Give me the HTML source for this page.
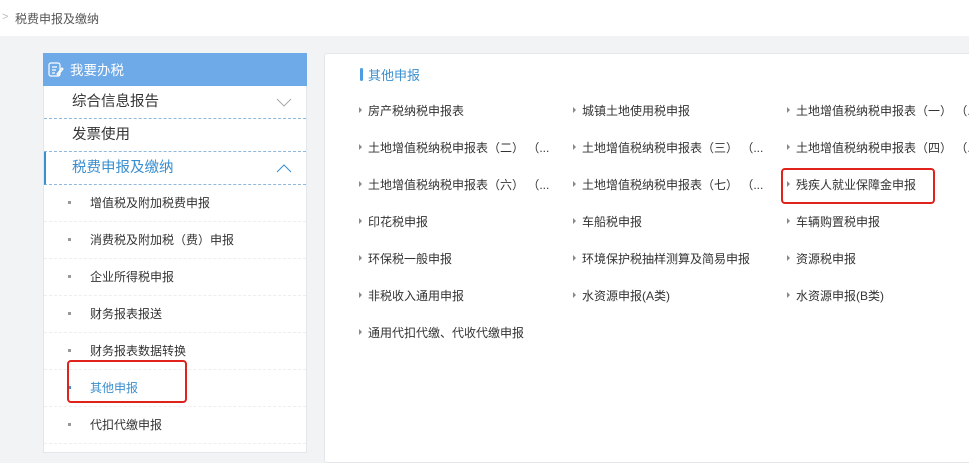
<!DOCTYPE html><html><head><meta charset="utf-8"><style>
*{margin:0;padding:0;box-sizing:border-box}
body{width:969px;height:449px;overflow:hidden;background:#f2f3f5;font-family:"Liberation Sans","Noto Sans CJK SC",sans-serif;font-size:12.5px;color:#333;position:relative}
.a{position:absolute;white-space:nowrap}
#top{position:absolute;left:0;top:0;width:969px;height:36px;background:#fff}
#left{position:absolute;left:43px;top:53px;width:264px;height:400px;background:#fff;border:1px solid #e3e6ea}
#lh{position:absolute;left:43px;top:53px;width:264px;height:33px;background:#6ea9e8;color:#fff;font-size:13.5px}
.row{position:absolute;left:44px;width:262px;height:33px;border-bottom:1px dashed #8fb8dd;font-size:14.5px;line-height:33px;padding-left:28px}
.sub{position:absolute;left:44px;width:262px;border-bottom:1px dashed #eee;height:37px}
.sub span{position:absolute;left:46px;top:9px;font-size:12px}
.sub i{position:absolute;left:24px;top:16px;width:3px;height:3px;background:#999}
#right{position:absolute;left:324px;top:53px;width:660px;height:410px;background:#fff;border:1px solid #e3e6ea;border-radius:3px}
.it{position:absolute;white-space:nowrap;font-size:12px}
.it:before{content:"";position:absolute;left:-9px;top:5px;border-left:3px solid #888;border-top:3px solid transparent;border-bottom:3px solid transparent}
.red{position:absolute;border:2.5px solid #e0221c;border-radius:4px}
</style></head><body>
<div id="top"></div>
<div class="a" style="left:2px;top:11px;color:#bbb;font-size:11px">&gt;</div>
<div class="a" style="left:15px;top:10px;color:#555;font-size:12px">税费申报及缴纳</div>
<div id="left"></div>
<div id="lh"><svg class="a" style="left:5px;top:8px" width="16" height="17" viewBox="0 0 16 17" fill="none" stroke="#fff" stroke-width="1.2"><rect x="1" y="2" width="11" height="13" rx="2"/><path d="M4 6h5M4 9h4M4 12h3M9 13l5-6 1 1-5 6z"/></svg><span class="a" style="left:27px;top:6px">我要办税</span></div>
<div class="row" style="top:86px">综合信息报告<svg class="a" style="left:232px;top:12px" width="16" height="9"><path d="M1 1l7 7 7-7" fill="none" stroke="#aaa"/></svg></div>
<div class="row" style="top:119px">发票使用</div>
<div class="row" style="top:152px;color:#3a8fd0;border-left:2px solid #3a8fd0;padding-left:26px">税费申报及缴纳<svg class="a" style="left:230px;top:12px" width="16" height="9"><path d="M1 8l7-7 7 7" fill="none" stroke="#3a8fd0"/></svg></div>
<div class="sub" style="top:185px"><i></i><span>增值税及附加税费申报</span></div>
<div class="sub" style="top:222px"><i></i><span>消费税及附加税（费）申报</span></div>
<div class="sub" style="top:259px"><i></i><span>企业所得税申报</span></div>
<div class="sub" style="top:296px"><i></i><span>财务报表报送</span></div>
<div class="sub" style="top:333px"><i></i><span>财务报表数据转换</span></div>
<div class="sub" style="top:370px"><i style="background:#3a8fd0"></i><span style="color:#3a8fd0">其他申报</span></div>
<div class="sub" style="top:407px"><i></i><span>代扣代缴申报</span></div>
<div class="red" style="left:67px;top:360px;width:120px;height:43px"></div>
<div id="right"></div>
<div class="a" style="left:360px;top:68px;width:3px;height:13px;background:#4a9de0;border-radius:2px"></div>
<div class="a" style="left:368px;top:65px;color:#3a8fd0;font-size:13px">其他申报</div>
<div class="it" style="left:368px;top:102px">房产税纳税申报表</div>
<div class="it" style="left:582px;top:102px">城镇土地使用税申报</div>
<div class="it" style="left:796px;top:102px">土地增值税纳税申报表（一）&nbsp;（...</div>
<div class="it" style="left:368px;top:139px">土地增值税纳税申报表（二）&nbsp;（...</div>
<div class="it" style="left:582px;top:139px">土地增值税纳税申报表（三）&nbsp;（...</div>
<div class="it" style="left:796px;top:139px">土地增值税纳税申报表（四）&nbsp;（...</div>
<div class="it" style="left:368px;top:176px">土地增值税纳税申报表（六）&nbsp;（...</div>
<div class="it" style="left:582px;top:176px">土地增值税纳税申报表（七）&nbsp;（...</div>
<div class="it" style="left:796px;top:176px">残疾人就业保障金申报</div>
<div class="it" style="left:368px;top:213px">印花税申报</div>
<div class="it" style="left:582px;top:213px">车船税申报</div>
<div class="it" style="left:796px;top:213px">车辆购置税申报</div>
<div class="it" style="left:368px;top:250px">环保税一般申报</div>
<div class="it" style="left:582px;top:250px">环境保护税抽样测算及简易申报</div>
<div class="it" style="left:796px;top:250px">资源税申报</div>
<div class="it" style="left:368px;top:287px">非税收入通用申报</div>
<div class="it" style="left:582px;top:287px">水资源申报(A类)</div>
<div class="it" style="left:796px;top:287px">水资源申报(B类)</div>
<div class="it" style="left:368px;top:324px">通用代扣代缴、代收代缴申报</div>
<div class="red" style="left:781px;top:168px;width:154px;height:36px"></div>
</body></html>
